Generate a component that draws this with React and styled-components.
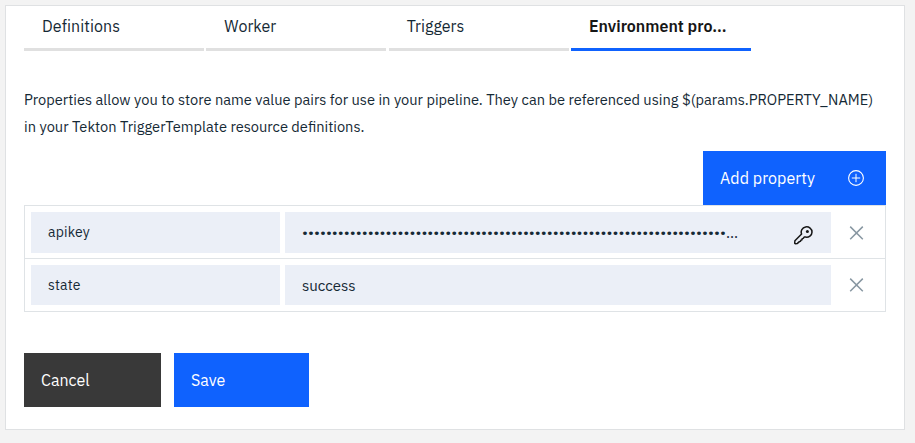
import React from "react";
import styled, { createGlobalStyle } from "styled-components";

const GlobalStyle = createGlobalStyle`
  * { box-sizing: border-box; }
  body {
    margin: 0;
    background: #f3f3f3;
    color: #152935;
    font-family: "IBM Plex Sans", Roboto, sans-serif;
    font-size: 16px;
  }
  button { font: inherit; border: 0; margin: 0; cursor: pointer; }
`;

const Page = styled.main`
  height: 443px;
  padding: 5px 10px 13px 5px;
`;

const Card = styled.section`
  height: 425px;
  padding: 0 18px;
  background: #fff;
  border: 1px solid #dfe1e3;
`;

const Tabs = styled.nav`
  display: flex;
  gap: 2.33px;
`;

const Tab = styled.button`
  width: 180px;
  height: 45px;
  padding: 1px 18px 4px;
  background: none;
  text-align: left;
  line-height: 36px;
  white-space: nowrap;
  color: ${(p) => (p.$active ? "#161616" : "#152935")};
  font-weight: ${(p) => (p.$active ? 600 : 400)};
  border-bottom: 3px solid ${(p) => (p.$active ? "#0f62fe" : "#e0e0e0")};
`;

const Text = styled.span`
  letter-spacing: ${(p) => p.$track || 0}px;
  white-space: nowrap;
`;

const Description = styled.p`
  margin: 35px 0 0;
  font-size: 14.64px;
  line-height: 27px;
`;

const Line = styled(Text)`
  display: block;
`;

const Toolbar = styled.div`
  display: flex;
  justify-content: flex-end;
  margin-top: 11px;
`;

const Button = styled.button`
  display: flex;
  align-items: center;
  justify-content: space-between;
  width: ${(p) => p.$width}px;
  height: 54px;
  padding: 0 22px 0 17px;
  color: #fff;
  background: ${(p) => (p.$secondary ? "#393939" : "#0f62fe")};
`;

const Properties = styled.div`
  border: 1px solid #dfe3e6;
  height: 107px;
`;

const Row = styled.div`
  display: grid;
  grid-template-columns: 249px 546px 1fr;
  column-gap: 5px;
  height: ${(p) => (p.$last ? 52 : 53)}px;
  padding: 6px 0 ${(p) => (p.$last ? 6 : 5)}px 6px;
  border-bottom: ${(p) => (p.$last ? 0 : 1)}px solid #dfe3e6;
`;

const Field = styled.div`
  display: flex;
  align-items: center;
  justify-content: space-between;
  padding: 0 17px;
  background: #ebeff7;
  font-size: ${(p) => p.$size || 15}px;
`;

const Label = styled(Text)`
  padding-bottom: 1px;
`;

const Masked = styled(Text)`
  padding-bottom: 1px;
`;

const Remove = styled.button`
  display: flex;
  align-items: center;
  padding: 0 0 0 13px;
  background: none;
`;

const Actions = styled.footer`
  display: flex;
  gap: 13px;
  margin-top: 41px;
`;

const AddIcon = () => (
  <svg width="16" height="16" viewBox="0 0 16 16" fill="none" stroke="#fff">
    <circle cx="8" cy="8" r="7.4" strokeWidth="1.1" />
    <path d="M8 3.8v8.4M3.8 8h8.4" strokeWidth="1" />
  </svg>
);

const CloseIcon = () => (
  <svg width="15" height="14" viewBox="0 0 15 14" fill="none" stroke="#8897a2" strokeWidth="1.5">
    <path d="M1.2.6l12.6 12.6M13.8.6L1.2 13.2" />
  </svg>
);

const KeySvg = styled.svg`
  margin-top: 5px;
`;

const KeyIcon = () => (
  <KeySvg width="20" height="20" viewBox="0 0 20 20" fill="none" stroke="#161616" strokeWidth="1.5" strokeLinejoin="round">
    <g transform="translate(-.6 1)">
      <path d="M8.2 8A5.4 5.2 0 1 1 12 11.1L10.9 11.1 9.7 12.4 8.8 12.7 8.6 13.8 7.5 14.2 7.1 15.2 6 15.6 4 17.4 1.9 17.7 1.3 17.1 1.5 14.7Z" />
      <circle cx="14" cy="5.6" r="1.5" fill="#161616" stroke="none" />
    </g>
  </KeySvg>
);

const tabs = [
  { label: "Definitions", track: 0.08 },
  { label: "Worker", track: 0.05 },
  { label: "Triggers" },
  { label: "Environment pro...", active: true },
];

export default function App() {
  return (
    <>
      <GlobalStyle />
      <Page>
        <Card>
          <Tabs>
            {tabs.map((t) => (
              <Tab key={t.label} $active={t.active}>
                <Text $track={t.track}>{t.label}</Text>
              </Tab>
            ))}
          </Tabs>
          <Description>
            <Line>
              Properties allow you to store name value pairs for use in your pipeline. They can be referenced using $(params.PROPERTY_NAME)
            </Line>
            <Line>in your Tekton TriggerTemplate resource definitions.</Line>
          </Description>
          <Toolbar>
            <Button $width={183}>
              <Text $track={0.07}>Add property</Text>
              <AddIcon />
            </Button>
          </Toolbar>
          <Properties>
            <Row>
              <Field $size={14}><Label $track={0.2}>apikey</Label></Field>
              <Field>
                <Masked $track={0.03}>{"•".repeat(71)}...</Masked>
                <KeyIcon />
              </Field>
              <Remove aria-label="Remove apikey"><CloseIcon /></Remove>
            </Row>
            <Row $last>
              <Field $size={14}><Text $track={0.2}>state</Text></Field>
              <Field><Text>success</Text></Field>
              <Remove aria-label="Remove state"><CloseIcon /></Remove>
            </Row>
          </Properties>
          <Actions>
            <Button $width={137} $secondary><Text>Cancel</Text></Button>
            <Button $width={135}><Text>Save</Text></Button>
          </Actions>
        </Card>
      </Page>
    </>
  );
}
